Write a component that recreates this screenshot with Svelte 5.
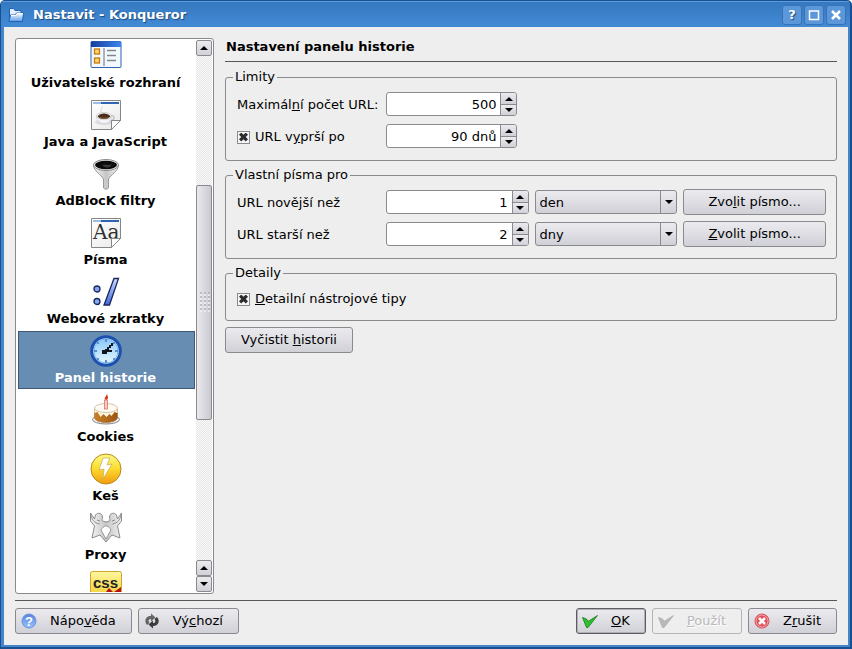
<script>
  // the last row is scrolled out of view below its icon
  const sections = [
    { id: 'ui', name: 'Uživatelské rozhraní' },
    { id: 'java', name: 'Java a JavaScript' },
    { id: 'adblock', name: 'AdBlocK filtry' },
    { id: 'fonts', name: 'Písma' },
    { id: 'shortcuts', name: 'Webové zkratky' },
    { id: 'history', name: 'Panel historie' },
    { id: 'cookies', name: 'Cookies' },
    { id: 'cache', name: 'Keš' },
    { id: 'proxy', name: 'Proxy' },
    { id: 'css' }
  ];

  let selected = $state('history');
  let maxUrls = $state(500);
  let expireDays = $state(90);
  let expires = $state(true);
  let newer = $state(1);
  let older = $state(2);
  let newerUnit = $state('den');
  let olderUnit = $state('dny');
  let tooltips = $state(true);

  // scrollbar thumb, in percent of the track
  const thumb = { top: 25.6, height: 46.6 };
</script>

<svelte:head>
  <title>Nastavit - Konqueror</title>
</svelte:head>

{#snippet arrow(down)}
  <svg class="arrow" width="8" height="4" viewBox="0 0 8 4" aria-hidden="true">
    <path d={down ? 'M0 0h8L4 4z' : 'M4 0l4 4H0z'} />
  </svg>
{/snippet}

{#snippet spin(id, value, change, suffix = '')}
  <div class="spin">
    <input {id} type="text" value={value + suffix} onchange={(e) => change(parseInt(e.currentTarget.value) || 0)} />
    <div class="steps">
      <button type="button" aria-label="Zvýšit" onclick={() => change(value + 1)}>{@render arrow(false)}</button>
      <button type="button" aria-label="Snížit" onclick={() => change(value - 1)}>{@render arrow(true)}</button>
    </div>
  </div>
{/snippet}

{#snippet page()}
  <path d="M1.500 1.500h29v20l-9 9h-20z" fill="url(#paper)" stroke="#868686" />
  <path d="M3 3h26v2H3z" fill="#2d65b4" />
  <path d="M3 3h8v2H3z" fill="#9dbde6" />
{/snippet}

{#snippet fold()}
  <path d="M30.500 21.500h-9v9z" fill="#fff" stroke="#868686" />
{/snippet}

{#snippet icon(id)}
  <svg class="icon" width="32" height="32" viewBox="0 0 32 32" aria-hidden="true">
    {#if id === 'ui'}
      <rect x="1" y="1.500" width="30" height="26" rx="1" fill="#f3f8ff" stroke="#2c62b3" />
      <path d="M1 1.500h30V7H1z" fill="url(#bluebar)" />
      <path d="M14 8v18" stroke="#5f6f8c" />
      <g fill="#ffd36b" stroke="#c57a14" stroke-width="1.300">
        <rect x="4.500" y="9" width="5" height="5" />
        <rect x="4.500" y="18" width="5" height="5" />
      </g>
      <path d="M17 10.500h9M17 15.500h9M17 20.500h9" stroke="#85858c" stroke-width="1.300" />
    {:else if id === 'java'}
      {@render page()}
      <ellipse cx="14" cy="23" rx="9" ry="3" fill="#d9dbe0" />
      <path d="M20 17c6-2 5 6-1 4" fill="none" stroke="#c5c9d2" stroke-width="1.800" />
      <path d="M6.500 17c0 10 15 10 15 0z" fill="#f4f4f7" stroke="#c7cad2" stroke-width=".6" />
      <ellipse cx="14" cy="17" rx="7.500" ry="3.500" fill="#f4f4f4" stroke="#bbb" stroke-width=".6" />
      <ellipse cx="14" cy="17.300" rx="6" ry="2.700" fill="#4b2f1c" />
      <path d="M8.500 18c2 2.500 9 2.500 11 0-3 1-8 1-11 0z" fill="#8a6038" />
      <path d="M12 13c-4-2 2-3 0-6" fill="none" stroke="#e2e2e5" stroke-width="1.500" />
      {@render fold()}
    {:else if id === 'adblock'}
      <path d="M3.500 7c0 6 8 10 10 14v9c1 1.500 4 1.500 5 0v-9c2-4 10-8 10-14z" fill="url(#steel)" stroke="#999" />
      <ellipse cx="16" cy="7" rx="12.500" ry="5.500" fill="#eee" stroke="#8a8a8a" />
      <ellipse cx="16" cy="7" rx="11" ry="4.200" fill="#0b0b0b" />
      <path d="M12 7c4-1 7 1 10-1l-2 3c-4 1-6 0-8-2z" fill="#3c3c3c" />
    {:else if id === 'fonts'}
      {@render page()}
      <text x="3" y="22" font-family="DejaVu Serif, serif" font-weight="normal" font-size="20" fill="#2f2f2f">Aa</text>
      {@render fold()}
    {:else if id === 'shortcuts'}
      <g fill="#88a7f0" stroke="#18285f" stroke-width="1.300">
        <circle cx="7" cy="13" r="3" />
        <circle cx="7" cy="25.500" r="3" />
        <path d="M24 2.500h4.500l-9 26.500H14z" fill="url(#slash)" />
      </g>
    {:else if id === 'history'}
      <circle cx="16" cy="16" r="14.300" fill="#b9e2ff" stroke="#1d4fae" stroke-width="3" />
      <circle cx="16" cy="16" r="12" fill="url(#face)" stroke="#7db5ec" />
      <path d="M15 4h2v3h-2zM15 25h2v3h-2zM4 15h3v2H4zM25 15h3v2h-3zM7 7h2v2H7zM23 7h2v2h-2zM7 23h2v2H7zM23 23h2v2h-2z" fill="#5b8fd0" />
      <path d="M12 15h3v-1h2v-2h2v-2h2V8h2v3h-2v2h-2v2h3v2h-5v2h-5z" fill="#10151d" />
    {:else if id === 'cookies'}
      <ellipse cx="16" cy="25.500" rx="13.500" ry="4.500" fill="#f3f3f5" stroke="#82828c" />
      <path d="M4.500 15v9c2 6 21 6 23 0v-9z" fill="url(#cake)" stroke="#a77339" stroke-width=".7" />
      <path d="M4.500 14v5l3-1 3 5 3-3 3 3 3-3 2 2 3-4 3 1v-5z" fill="#fff6e2" />
      <ellipse cx="16" cy="14" rx="11.500" ry="4.500" fill="#fffaf2" stroke="#c2ad8c" stroke-width=".7" />
      <rect x="14.500" y="6" width="3" height="9" fill="#fbc9bd" stroke="#d6675a" stroke-width=".7" />
      <path d="M16 6c-3-2 0-3 1-6 1 3 2 5-1 6z" fill="#d93a16" />
    {:else if id === 'cache'}
      <circle cx="16" cy="16" r="15" fill="url(#gold)" stroke="#b88a10" />
      <path d="M13 5h7l-3 7 5-1-9 15 1-10-5 1z" fill="#fff" stroke="#c8a94a" stroke-width=".7" />
    {:else if id === 'proxy'}
      <path d="M.5 1l4 6 1-4c2-3 7-2 7 2 0 2-1 3 0 4l3.500 1 3.500-1c1-1 0-2 0-4 0-4 5-5 7-2l1 4 4-6v8l-4 5 2.500 12-8-3-6 7-6-7-8 3L4.500 14 .5 9z" fill="url(#steel)" stroke="#8c8c8c" />
      <path d="M.5 1c1 7 4 10 9 11M31.500 1c-1 7-4 10-9 11M10 9l-3-1M22 9l3-1" fill="none" stroke="#8c8c8c" />
      <path d="M16 14c2 0 4 2 5 4l-5 9-5-9c1-2 3-4 5-4z" fill="#fff" stroke="#999" />
    {:else if id === 'css'}
      <rect x=".5" y=".5" width="31" height="31" rx="2" fill="url(#cssbox)" stroke="#c9a62c" />
      <text x="3" y="17" font-family="Liberation Sans, sans-serif" font-weight="bold" font-size="15" fill="#222">css</text>
      <path d="M16 21l3-4 4 4zM24 21l7-5v5z" fill="#b80f0f" />
    {/if}
  </svg>
{/snippet}

<!-- gradients shared by the icons -->
<svg class="defs" width="0" height="0" aria-hidden="true">
  <defs>
    <linearGradient id="paper" x2="1" y2="1"><stop stop-color="#fff" /><stop offset="1" stop-color="#e9e9e9" /></linearGradient>
    <linearGradient id="bluebar"><stop stop-color="#153c9d" /><stop offset="1" stop-color="#3c86ee" /></linearGradient>
    <linearGradient id="steel"><stop stop-color="#f6f6f6" /><stop offset=".5" stop-color="#c6c6c6" /><stop offset="1" stop-color="#f0f0f0" /></linearGradient>
    <linearGradient id="slash" x2="0" y2="1"><stop stop-color="#cfdcff" /><stop offset="1" stop-color="#4166d8" /></linearGradient>
    <linearGradient id="face" x2="0" y2="1"><stop stop-color="#8cc8fa" /><stop offset="1" stop-color="#e2f6ff" /></linearGradient>
    <linearGradient id="cake"><stop stop-color="#c98027" /><stop offset="1" stop-color="#9c5510" /></linearGradient>
    <linearGradient id="gold" x2="0" y2="1"><stop stop-color="#fffa8c" /><stop offset=".5" stop-color="#fbdb2c" /><stop offset="1" stop-color="#f39a12" /></linearGradient>
    <linearGradient id="cssbox" x2="0" y2="1"><stop stop-color="#fff6a0" /><stop offset="1" stop-color="#efc61c" /></linearGradient>
    <linearGradient id="help" x2="0" y2="1"><stop stop-color="#5582d8" /><stop offset="1" stop-color="#9ac4ff" /></linearGradient>
    <linearGradient id="folder" x2="0" y2="1"><stop stop-color="#fff" /><stop offset="1" stop-color="#5c9be6" /></linearGradient>
  </defs>
</svg>

<div class="window">
  <header>
    <svg width="16" height="16" viewBox="0 0 16 16" aria-hidden="true">
      <path d="M1.500 13V1.500h4l1.500 2h6V6" fill="#e4f0ff" stroke="#2161b4" />
      <path d="M1 14.500L2.500 8H7l1.500-2H15.500l-1 8.500z" fill="url(#folder)" stroke="#2161b4" />
      <path d="M3 8.500h4.500l1.500-2h6" fill="none" stroke="#fff" />
    </svg>
    <h1>Nastavit - Konqueror</h1>
    <div class="controls">
      <button type="button" aria-label="Nápověda">?</button>
      <button type="button" aria-label="Maximalizovat">
        <svg width="12" height="12" viewBox="0 0 12 12"><path d="M1.500 2h9v8.500h-9zM1 2h10" stroke-width="1.500" /></svg>
      </button>
      <button type="button" aria-label="Zavřít">
        <svg width="12" height="12" viewBox="0 0 12 12"><path d="M2 2l8 8M10 2l-8 8" stroke-width="2.500" /></svg>
      </button>
    </div>
  </header>

  <main>
    <div class="columns">
      <nav>
        <div class="viewport">
          <ul>
            {#each sections as section (section.id)}
              <li>
                <button type="button" class:selected={selected === section.id} onclick={() => (selected = section.id)}>
                  {@render icon(section.id)}
                  {#if section.name}<span>{section.name}</span>{/if}
                </button>
              </li>
            {/each}
          </ul>
        </div>
        <div class="scrollbar">
          <button type="button" aria-label="Nahoru">{@render arrow(false)}</button>
          <div class="track">
            <div style:height="{thumb.top}%"></div>
            <div class="thumb" style:height="{thumb.height}%"><i></i></div>
          </div>
          <button type="button" aria-label="Nahoru">{@render arrow(false)}</button>
          <button type="button" aria-label="Dolů">{@render arrow(true)}</button>
        </div>
      </nav>

      <form id="history" onsubmit={(e) => e.preventDefault()}>
        <h2>Nastavení panelu historie</h2>

        <fieldset>
          <legend>Limity</legend>
          <div class="limits">
            <label for="max-urls">Maximál<u>n</u>í počet URL:</label>
            {@render spin('max-urls', maxUrls, (v) => (maxUrls = v))}
            <label class="check"><input type="checkbox" bind:checked={expires} /><span>URL v<u>y</u>prší po</span></label>
            {@render spin('expire-days', expireDays, (v) => (expireDays = v), ' dnů')}
          </div>
        </fieldset>

        <fieldset>
          <legend>Vlastní písma pro</legend>
          <div class="fonts">
            <label for="newer">URL novější než</label>
            {@render spin('newer', newer, (v) => (newer = v))}
            <div class="combo">
              <select aria-label="Jednotka" bind:value={newerUnit}>
                <option>den</option>
              </select>
              <span>{@render arrow(true)}</span>
            </div>
            <button type="button" class="push">Zvo<u>l</u>it písmo...</button>

            <label for="older">URL starší než</label>
            {@render spin('older', older, (v) => (older = v))}
            <div class="combo">
              <select aria-label="Jednotka" bind:value={olderUnit}>
                <option>dny</option>
              </select>
              <span>{@render arrow(true)}</span>
            </div>
            <button type="button" class="push"><u>Z</u>volit písmo...</button>
          </div>
        </fieldset>

        <fieldset>
          <legend>Detaily</legend>
          <label class="check"><input type="checkbox" bind:checked={tooltips} /><span><u>D</u>etailní nástrojové tipy</span></label>
        </fieldset>

        <button type="button" class="push clear">Vyčistit <u>h</u>istorii</button>
      </form>
    </div>

    <footer>
      <button type="button" class="push">
        <svg width="16" height="16" viewBox="0 0 16 16" aria-hidden="true">
          <circle cx="8" cy="8" r="7" fill="url(#help)" stroke="#6a94dc" />
          <text x="8" y="13" text-anchor="middle" font-family="Liberation Sans, sans-serif" font-weight="bold" font-size="13" fill="#fff">?</text>
        </svg>
        <span>Nápo<u>v</u>ěda</span>
      </button>
      <button type="button" class="push">
        <svg width="16" height="16" viewBox="0 0 16 16" aria-hidden="true">
          <path d="M3 12C-.5 8 2 2.500 7 3V.500l4.500 4L7 8.500V6C4.500 6 4 8 5.500 10z" fill="#666" />
          <path d="M13 4c3.500 4 1 9.500-4 9v2.500l-4.500-4L9 7.500V10c2.500 0 3-2 1.500-4z" fill="#3c3c3c" />
        </svg>
        <span>Vý<u>c</u>hozí</span>
      </button>
      <div class="spacer"></div>
      <button type="submit" form="history" class="push default">
        <svg width="16" height="16" viewBox="0 0 16 16" aria-hidden="true">
          <path d="M.5 4.500l4 1.500L6 8.500l9.500-6L6 14.500H4.500z" fill="#2fc02f" stroke="#157a1b" stroke-width=".8" />
        </svg>
        <span><u>O</u>K</span>
      </button>
      <button type="button" class="push" disabled>
        <svg width="16" height="16" viewBox="0 0 16 16" aria-hidden="true">
          <path d="M.5 4.500l4 1.500L6 8.500l9.500-6L6 14.500H4.500z" fill="#b9b9b9" stroke="#adadad" stroke-width=".8" />
        </svg>
        <span><u>P</u>oužít</span>
      </button>
      <button type="button" class="push">
        <svg width="16" height="16" viewBox="0 0 16 16" aria-hidden="true">
          <circle cx="8" cy="8" r="7" fill="#e2505a" stroke="#d4505a" />
          <circle cx="8" cy="8" r="6" fill="none" stroke="#f3a9ac" />
          <path d="M5 5l6 6M11 5l-6 6" stroke="#fff" stroke-width="2.500" />
        </svg>
        <span>Z<u>r</u>ušit</span>
      </button>
    </footer>
  </main>
</div>

<style>
  :global(body) {
    background: #fff;
  }

  .window {
    --line: #8a8a8e;
    --face: linear-gradient(#ebebef, #d0d0d7);
    display: flex;
    flex-direction: column;
    box-sizing: border-box;
    height: 100vh;
    min-height: 420px;
    border: 1px solid #174f92;
    border-width: 1px 2px 2px 1px;
    border-radius: 5px 5px 0 0;
    padding: 0 2px 2px 3px;
    background: #4385c8;
    color: #000;
    font: 13px/16px "DejaVu Sans", sans-serif;
    overflow: hidden;
  }

  .window :is(button, input, select) {
    box-sizing: border-box;
    margin: 0;
    color: inherit;
    font: inherit;
  }

  .defs {
    position: absolute;
  }

  header {
    display: flex;
    align-items: center;
    gap: 9px;
    flex: none;
    height: 26px;
    margin: 0 -2px 0 -3px;
    padding: 2px 4px 0 7px;
    box-sizing: border-box;
    box-shadow: inset 0 1px #5e9ce0;
    background: linear-gradient(#3478be, #438ad6);

    h1 {
      flex: 1;
      margin: 0;
      color: #fff;
      font-size: 13px;
      text-shadow: 1px 1px 1px #1c4a80;
    }
  }

  .controls {
    display: flex;
    gap: 2px;

    button {
      display: grid;
      place-items: center;
      width: 20px;
      height: 20px;
      padding: 0;
      border: 1px solid #3673b6;
      border-radius: 3px;
      background: #5b97d9;
      color: #fff;
      font-weight: bold;
      text-shadow: 1px 1px 1px #1c4a80;
    }

    svg {
      fill: none;
      stroke: #fff;
    }
  }

  main {
    display: flex;
    flex: 1;
    flex-direction: column;
    min-height: 0;
    padding: 11px;
    background: #eee;
  }

  .columns {
    display: flex;
    flex: 1;
    gap: 11px;
    min-height: 0;
    padding-bottom: 6px;
    border-bottom: 1px solid #58585c;
  }

  nav {
    display: flex;
    gap: 1px;
    flex: none;
    box-sizing: border-box;
    width: 199px;
    padding: 1px 1px 1px 2px;
    border: 1px solid var(--line);
    border-radius: 3px;
    background: #fff;
  }

  .viewport {
    flex: 1;
    overflow: hidden;

    ul {
      /* list is scrolled a little below its first row */
      margin: -4px 0 0;
      padding: 0;
      list-style: none;
    }

    li {
      padding-bottom: 1px;
    }

    button {
      display: flex;
      flex-direction: column;
      align-items: center;
      gap: 3px;
      width: 100%;
      height: 58px;
      padding: 3px 2px 0 0;
      border: 1px solid transparent;
      background: none;
      font-weight: bold;

      &.selected {
        border-color: #3f5877;
        background: #678db2;
        color: #fff;
      }
    }

    .icon {
      flex: none;
    }
  }

  .scrollbar {
    display: flex;
    flex-direction: column;
    width: 16px;

    button {
      display: grid;
      place-items: center;
      flex: none;
      height: 16px;
      padding: 0;
      border: 1px solid var(--line);
      border-radius: 2px;
      background: var(--face);
    }

    .track {
      flex: 1;
      background: repeating-conic-gradient(#e6e6e6 0 25%, #fafafa 0 50%) 0 0 / 2px 2px;
    }

    .thumb {
      display: grid;
      place-items: center;
      box-sizing: border-box;
      border: 1px solid var(--line);
      border-radius: 2px;
      background: linear-gradient(to right, #e9e9ee, #c9c9d1);
    }

    i {
      width: 12px;
      height: 20px;
      background: conic-gradient(#a6a6ae 25%, #f6f6f8 0 50%, transparent 0) 0 0 / 4px 4px;
      opacity: 0.6;
    }
  }

  .arrow {
    display: block;
    fill: #000;
  }

  form {
    display: flex;
    flex: 1;
    flex-direction: column;
    align-items: stretch;
    gap: 6px;
    min-width: 0;
  }

  h2 {
    margin: 0 0 1px;
    padding: 1px 1px 6px;
    border-bottom: 1px solid #58585c;
    font-size: 13px;
  }

  fieldset {
    min-width: 0;
    margin: 0;
    padding: 6px 10px 11px 11px;
    border: 1px solid var(--line);
    border-radius: 3px;
  }

  legend {
    margin-left: -4px;
    padding: 0 2px;
  }

  label {
    padding-top: 2px;
  }

  .limits,
  .fonts {
    display: grid;
    grid-auto-rows: 26px;
    align-items: center;
    gap: 6px;
  }

  .limits {
    grid-template-columns: auto 131px;
    column-gap: 8px;
    justify-content: start;
  }

  .fonts {
    grid-template-columns: repeat(4, 1fr);
  }

  .check {
    display: flex;
    align-items: center;
    gap: 5px;
    box-sizing: border-box;
    height: 22px;

    input {
      display: grid;
      place-items: center;
      width: 13px;
      height: 13px;
      border: 1px solid var(--line);
      background: #f6f6f6;
      appearance: none;
    }

    input:checked::before {
      content: "";
      width: 9px;
      height: 9px;
      background: #2c2c2c;
      clip-path: polygon(0 25%, 25% 0, 50% 25%, 75% 0, 100% 25%, 75% 50%, 100% 75%, 75% 100%, 50% 75%, 25% 100%, 0 75%, 25% 50%);
    }
  }

  .spin {
    display: flex;
    box-sizing: border-box;
    height: 24px;
    border: 1px solid var(--line);
    border-radius: 3px;
    background: #fff;
    overflow: hidden;

    input {
      flex: 1;
      width: 0;
      padding: 2px 4px 0;
      border: 0;
      background: none;
      text-align: right;
    }
  }

  .steps {
    display: grid;
    grid-template-rows: 1fr 1fr;
    width: 15px;
    border-left: 1px solid var(--line);

    button {
      display: grid;
      place-items: center;
      min-height: 0;
      padding: 0;
      border: 0;
      background: var(--face);
    }

    button + button {
      border-top: 1px solid var(--line);
    }
  }

  .combo {
    display: grid;
    height: 24px;

    select,
    span {
      grid-area: 1 / 1;
    }

    select {
      width: 100%;
      padding: 2px 20px 0 4px;
      border: 1px solid var(--line);
      border-radius: 3px;
      background: var(--face);
      appearance: none;
    }

    span {
      display: grid;
      place-items: center;
      justify-self: end;
      width: 16px;
      border-left: 1px solid var(--line);
      margin: 1px 0;
      pointer-events: none;
    }
  }

  .push {
    height: 26px;
    padding: 0 14px;
    border: 1px solid var(--line);
    border-radius: 3px;
    background: var(--face);
    white-space: nowrap;
  }

  .clear {
    align-self: flex-start;
    padding: 0 15px;
  }

  footer {
    display: flex;
    flex: none;
    gap: 6px;
    padding-top: 7px;

    .push {
      display: flex;
      align-items: center;
      gap: 13px;
      padding: 0 15px 0 5px;
    }

    .default {
      border-color: #5c5c62;
      box-shadow: inset 0 0 0 1px #b0b0b5;
    }

    .push:disabled {
      border-color: #b4b4b8;
      background: #eee;
      color: #b8b8bc;
      text-shadow: 1px 1px #fff;
    }
  }

  .spacer {
    flex: 1;
  }
</style>
